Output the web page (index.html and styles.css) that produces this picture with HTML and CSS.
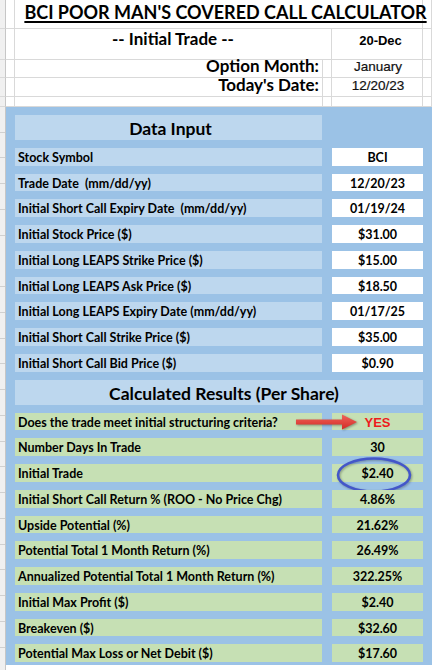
FILE: index.html
```html
<!DOCTYPE html>
<html>
<head>
<meta charset="utf-8">
<title>BCI Poor Man's Covered Call Calculator</title>
<link rel="stylesheet" href="styles.css">
</head>
<body>
<div class="sheet">
  <div class="top">
    <div class="c strip"></div><div class="c"></div>
    <div class="c title span3"><span>BCI POOR MAN'S COVERED CALL CALCULATOR</span></div>
    <div class="c"></div>

    <div class="c strip"></div><div class="c"></div>
    <div class="c sub span2">-- Initial Trade --</div>
    <div class="c arial-b center">20-Dec</div>
    <div class="c"></div>

    <div class="c strip"></div><div class="c"></div>
    <div class="c big right">Option Month:</div>
    <div class="c"></div>
    <div class="c arial center">January</div>
    <div class="c"></div>

    <div class="c strip"></div><div class="c"></div>
    <div class="c big right">Today's Date:</div>
    <div class="c"></div>
    <div class="c arial center">12/20/23</div>
    <div class="c"></div>

    <div class="c strip"></div><div class="c"></div><div class="c"></div><div class="c"></div><div class="c"></div><div class="c"></div>
  </div>

  <div class="bottom">
    <div class="strip-low"></div>
    <div class="panel">
      <div class="head head-input">Data Input</div>

      <div class="row"><div class="label in">Stock Symbol</div><div class="value in">BCI</div></div>
      <div class="row"><div class="label in">Trade Date&nbsp; (mm/dd/yy)</div><div class="value in">12/20/23</div></div>
      <div class="row"><div class="label in">Initial Short Call Expiry Date&nbsp; (mm/dd/yy)</div><div class="value in">01/19/24</div></div>
      <div class="row"><div class="label in">Initial Stock Price ($)</div><div class="value in">$31.00</div></div>
      <div class="row"><div class="label in">Initial Long LEAPS Strike Price ($)</div><div class="value in">$15.00</div></div>
      <div class="row"><div class="label in">Initial Long LEAPS Ask Price ($)</div><div class="value in">$18.50</div></div>
      <div class="row"><div class="label in">Initial Long LEAPS Expiry Date (mm/dd/yy)</div><div class="value in">01/17/25</div></div>
      <div class="row"><div class="label in">Initial Short Call Strike Price ($)</div><div class="value in">$35.00</div></div>
      <div class="row"><div class="label in">Initial Short Call Bid Price ($)</div><div class="value in">$0.90</div></div>

      <div class="head head-results">Calculated Results (Per Share)</div>

      <div class="row marked">
        <div class="label out">Does the trade meet initial structuring criteria?</div><div class="value out yes">YES</div>
        <svg class="arrow" width="64" height="18" viewBox="0 0 64 18">
          <defs>
            <linearGradient id="ag" x1="0" y1="0" x2="0" y2="1">
              <stop offset="0" stop-color="#f0645a"/>
              <stop offset="1" stop-color="#d22b25"/>
            </linearGradient>
          </defs>
          <path d="M1 6.5 H47 V1.5 L62 9 L47 16.5 V11.5 H1 Z" fill="url(#ag)"/>
        </svg>
      </div>
      <div class="row"><div class="label out">Number Days In Trade</div><div class="value out">30</div></div>
      <div class="row circled">
        <div class="label out">Initial Trade</div><div class="value out">$2.40</div>
        <svg class="ring" width="78" height="38" viewBox="0 0 78 38">
          <ellipse cx="39" cy="19" rx="36" ry="16.5" fill="none" stroke="#4356c9" stroke-width="2.6"/>
        </svg>
      </div>
      <div class="row"><div class="label out">Initial Short Call Return % (ROO - No Price Chg)</div><div class="value out">4.86%</div></div>
      <div class="row"><div class="label out">Upside Potential (%)</div><div class="value out">21.62%</div></div>
      <div class="row"><div class="label out">Potential Total 1 Month Return (%)</div><div class="value out">26.49%</div></div>
      <div class="row"><div class="label out">Annualized Potential Total 1 Month Return (%)</div><div class="value out">322.25%</div></div>
      <div class="row"><div class="label out">Initial Max Profit ($)</div><div class="value out">$2.40</div></div>
      <div class="row"><div class="label out">Breakeven ($)</div><div class="value out">$32.60</div></div>
      <div class="row"><div class="label out">Potential Max Loss or Net Debit ($)</div><div class="value out">$17.60</div></div>
    </div>
  </div>
</div>
</body>
</html>
```

FILE: styles.css
```css
* { box-sizing: border-box; }
html, body { margin: 0; padding: 0; }
body {
  width: 432px;
  height: 670px;
  overflow: hidden;
  background: #ffffff;
  font-family: "Lato", "Open Sans", sans-serif;
  color: #000;
}
.sheet { display: flex; flex-direction: column; }

.top {
  display: grid;
  grid-template-columns: 6px 9px 308px 9px 91px 9px;
  grid-template-rows: 29px 31px 18px 19px 10px;
}
.c {
  border-right: 1px solid #d9d9d9;
  border-bottom: 1px solid #d9d9d9;
  white-space: nowrap;
  display: flex;
  align-items: flex-end;
}
.strip { background: #f0f0f0; border-right-color: #c6c6c6; }
.span3 { grid-column: span 3; }
.span2 { grid-column: span 2; }
.title {
  justify-content: center;
  overflow: visible;
  font-weight: 700;
  font-size: 18px;
  padding-bottom: 5px;
  padding-left: 14px;
}
.title span { text-decoration: underline; text-decoration-thickness: 1.5px; text-underline-offset: 2px; }
.sub {
  justify-content: center;
  font-weight: 700;
  font-size: 17px;
  padding-bottom: 10px;
}
.big {
  font-weight: 700;
  font-size: 17px;
  line-height: 18px;
}
.right { justify-content: flex-end; padding-right: 3px; padding-bottom: 2px; }
.center { justify-content: center; }
.arial-b {
  font-family: "Liberation Sans", Arial, sans-serif;
  font-weight: 700;
  font-size: 13px;
  padding-bottom: 11px;
  padding-left: 7px;
}
.arial {
  font-family: "Liberation Sans", Arial, sans-serif;
  font-size: 13.5px;
  line-height: 14px;
  padding-bottom: 3px;
  padding-left: 2px;
  color: #111;
  -webkit-text-stroke: 0.2px #111;
}

.bottom { display: flex; height: 563px; }
.strip-low {
  width: 6px;
  background: repeating-linear-gradient(to bottom, #f0f0f0 0, #f0f0f0 24.75px, #d0d0d0 24.75px, #d0d0d0 25.75px);
  border-right: 1px solid #c6c6c6;
}
.panel {
  flex: 1;
  height: 558px;
  background: #9bc2e6;
  padding: 8px 0 3px 9px;
  display: flex;
  flex-direction: column;
  gap: 8px;
}
.head {
  height: 25px;
  background: #bdd7ee;
  font-weight: 700;
  font-size: 17.5px;
  display: flex;
  align-items: center;
  justify-content: center;
  padding-top: 2px;
}
.head-input { width: 307px; padding-left: 4px; }
.head-results { width: 408px; padding-left: 10px; }

.row {
  display: flex;
  gap: 10px;
  height: 17.75px;
  position: relative;
}
.label, .value {
  font-weight: 700;
  font-size: 12.5px;
  line-height: 17.75px;
  padding-top: 1px;
  white-space: nowrap;
}
.label { width: 307px; padding-left: 3px; }
.value { width: 91px; text-align: center; }
.label.in { background: #bdd7ee; }
.value.in { background: #ffffff; }
.label.out, .value.out { background: #c6e0b4; }

.yes {
  color: #ee1c1c;
  font-family: "Liberation Sans", Arial, sans-serif;
  font-size: 13px;
}
.arrow {
  position: absolute;
  left: 280px;
  top: 0px;
  filter: drop-shadow(1px 1px 1px rgba(0,0,0,0.35));
}
.ring {
  position: absolute;
  left: 320px;
  top: -8px;
  filter: drop-shadow(1px 1px 1px rgba(0,0,0,0.3));
}
```
